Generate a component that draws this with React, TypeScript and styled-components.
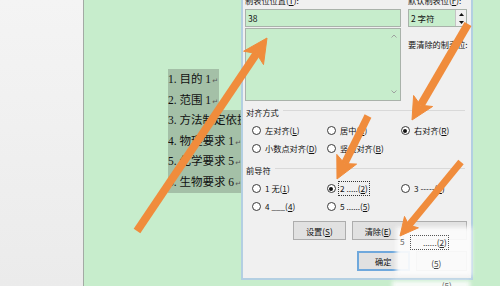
import React from "react";
import styled, { createGlobalStyle } from "styled-components";

const Global = createGlobalStyle`
  html, body { margin: 0; padding: 0; }
  body {
    width: 500px;
    height: 286px;
    overflow: hidden;
    font-family: "Noto Sans CJK SC", "Noto Sans", sans-serif;
  }
`;

const Screen = styled.div`
  position: relative;
  width: 500px;
  height: 286px;
  display: flex;
  overflow: hidden;
`;

const SidePane = styled.div`
  width: 83px;
  flex: none;
  background: linear-gradient(#f4f4f4, #ebebeb);
  border-right: 1px solid #a3aaa4;
`;

const Page = styled.div`
  position: relative;
  flex: 1;
  background: #c7edcc;
  padding: 69px 0 0 84px;
`;

const DocLines = styled.div`
  display: flex;
  flex-direction: column;
  font-family: "Liberation Serif", "Noto Sans CJK SC", serif;
  font-size: 11.5px;
  color: #111;
`;

const DocLine = styled.div<{ $w: number }>`
  width: ${(p) => p.$w}px;
  height: 20.6px;
  line-height: 20.6px;
  background: #a4c0a7;
  white-space: nowrap;
  overflow: hidden;
`;

const ParaMark = styled.span`
  font-family: "DejaVu Sans", sans-serif;
  font-size: 7px;
  color: #555;
  margin-left: 1px;
`;

const Dialog = styled.div`
  position: absolute;
  left: 157px;
  top: -11px;
  width: 232px;
  height: 291px;
  box-sizing: border-box;
  background: #f0f0f0;
  border: 2px solid #b3cfe2;
  padding: 2px 4px 0 2px;
  display: flex;
  flex-direction: column;
  font-size: 8.2px;
  color: #111;
`;

const TopGrid = styled.div`
  display: grid;
  grid-template-columns: 156px 59px;
  column-gap: 7px;
`;

const Col = styled.div`
  display: flex;
  flex-direction: column;
`;

const Label = styled.div<{ $mt?: number }>`
  height: 14px;
  line-height: 14px;
  margin-top: ${(p) => p.$mt ?? 0}px;
  white-space: nowrap;
`;

const TextBox = styled.div`
  height: 18px;
  box-sizing: border-box;
  margin-top: 2px;
  border: 1px solid #a9b2aa;
  background: #c7edcc;
  line-height: 16px;
  padding-left: 2px;
  font-family: "Noto Sans CJK SC", sans-serif;
  font-size: 8.5px;
  display: flex;
`;

const SpinText = styled.div`
  flex: 1;
`;

const SpinButtons = styled.div`
  width: 10px;
  display: flex;
  flex-direction: column;
  border-left: 1px solid #c4c4c4;
  background: #f0f0f0;
`;

const SpinHalf = styled.div`
  flex: 1;
  display: flex;
  align-items: center;
  justify-content: center;
`;

const ListBox = styled.div`
  height: 73px;
  box-sizing: border-box;
  margin-top: 1px;
  border: 1px solid #a9b2aa;
  background: #c7edcc;
  display: flex;
  justify-content: flex-end;
`;

const ScrollTrack = styled.div`
  width: 12px;
  display: flex;
  flex-direction: column;
  justify-content: space-between;
  align-items: center;
  padding: 5px 0 6px;
`;

const SectionHeader = styled.div<{ $mt: number }>`
  display: flex;
  align-items: flex-start;
  margin-top: ${(p) => p.$mt}px;
  padding-left: 1px;
  height: 14px;
  line-height: 14px;
`;

const SectionRule = styled.div`
  flex: 1;
  height: 1px;
  margin: 5px 2px 0 4px;
  background: #d9d9d9;
`;

const RadioGrid = styled.div<{ $mt: number }>`
  display: grid;
  grid-template-columns: 75px 74px 1fr;
  grid-auto-rows: 17.6px;
  margin-top: ${(p) => p.$mt}px;
  padding-left: 6.5px;
`;

const Radio = styled.div`
  display: flex;
  align-items: center;
  gap: 3.5px;
  white-space: nowrap;
`;

const RadioDot = styled.span<{ $on?: boolean }>`
  width: 9px;
  height: 9px;
  box-sizing: border-box;
  border-radius: 50%;
  border: 1px solid #3a3a3a;
  background: #fff;
  flex: none;
  display: flex;
  align-items: center;
  justify-content: center;
  &::after {
    content: "";
    width: 4px;
    height: 4px;
    border-radius: 50%;
    background: ${(p) => (p.$on ? "#111" : "transparent")};
  }
`;

const RadioText = styled.span<{ $focus?: boolean }>`
  line-height: 11px;
  padding: 1px 1px;
  border: 1px dotted ${(p) => (p.$focus ? "#333" : "transparent")};
  margin-left: -1px;
`;

const ButtonRow = styled.div<{ $mt: number; $pl: number }>`
  display: flex;
  gap: 6px;
  margin-top: ${(p) => p.$mt}px;
  padding-left: ${(p) => p.$pl}px;
`;

const Button = styled.div<{ $w: number; $h: number; $default?: boolean }>`
  width: ${(p) => p.$w}px;
  height: ${(p) => p.$h}px;
  box-sizing: border-box;
  background: #e1e1e1;
  border: ${(p) => (p.$default ? "2px solid #6fa8dc" : "1px solid #adadad")};
  display: flex;
  align-items: center;
  justify-content: center;
  white-space: nowrap;
`;

const Ghost = styled.div<{ $x: number; $y: number; $w: number; $h: number }>`
  position: absolute;
  left: ${(p) => p.$x}px;
  top: ${(p) => p.$y}px;
  width: ${(p) => p.$w}px;
  height: ${(p) => p.$h}px;
  background: rgba(252, 252, 252, 0.93);
  filter: blur(2px);
`;

const GhostText = styled.div<{ $x: number; $y: number; $c?: string; $box?: boolean }>`
  position: absolute;
  left: ${(p) => p.$x}px;
  top: ${(p) => p.$y}px;
  font-size: 8.2px;
  line-height: 11px;
  color: ${(p) => p.$c ?? "#222"};
  white-space: nowrap;
  padding: 1px;
  border: 1px dotted ${(p) => (p.$box ? "#555" : "transparent")};
`;

const Overlay = styled.svg`
  position: absolute;
  left: 0;
  top: 0;
  pointer-events: none;
`;

type ArrowProps = { x1: number; y1: number; x2: number; y2: number; w: number; hl: number; hw: number };

function Arrow({ x1, y1, x2, y2, w, hl, hw }: ArrowProps) {
  const dx = x2 - x1;
  const dy = y2 - y1;
  const L = Math.hypot(dx, dy);
  const ux = dx / L;
  const uy = dy / L;
  const px = -uy;
  const py = ux;
  const bx = x2 - ux * hl;
  const by = y2 - uy * hl;
  const nx = x2 - ux * hl * 0.78;
  const ny = y2 - uy * hl * 0.78;
  const pts = [
    [x2, y2],
    [bx + px * hw, by + py * hw],
    [nx, ny],
    [bx - px * hw, by - py * hw],
  ]
    .map((p) => p.map((v) => v.toFixed(1)).join(","))
    .join(" ");
  return (
    <g fill="#f08c3c" stroke="#f08c3c">
      <line x1={x1} y1={y1} x2={nx} y2={ny} strokeWidth={w} />
      <polygon points={pts} strokeWidth={1} strokeLinejoin="round" />
    </g>
  );
}

const Chevron = ({ up }: { up?: boolean }) => (
  <svg width="6" height="4" viewBox="0 0 6 4">
    <path d={up ? "M0.5 3.5 L3 1 L5.5 3.5" : "M0.5 0.5 L3 3 L5.5 0.5"} fill="none" stroke="#9a9a9a" strokeWidth="0.9" />
  </svg>
);

const Tri = ({ up }: { up?: boolean }) => (
  <svg width="5" height="3" viewBox="0 0 5 3">
    <path d={up ? "M0 3 L2.5 0 L5 3 Z" : "M0 0 L2.5 3 L5 0 Z"} fill="#111" />
  </svg>
);

const lines: { t: string; w: number }[] = [
  { t: "1. 目的 1", w: 51 },
  { t: "2. 范围 1", w: 51 },
  { t: "3. 方法制定依据 2", w: 90 },
  { t: "4. 物理要求 1", w: 90 },
  { t: "5. 化学要求 5", w: 90 },
  { t: "6. 生物要求 6", w: 90 },
];

export default function App() {
  return (
    <>
      <Global />
      <Screen>
        <SidePane />
        <Page>
          <DocLines>
            {lines.map((l) => (
              <DocLine key={l.t} $w={l.w}>
                {l.t}
                <ParaMark>↵</ParaMark>
              </DocLine>
            ))}
          </DocLines>
          <Dialog>
            <TopGrid>
              <Col>
                <Label>
                  制表位位置(<u>T</u>):
                </Label>
                <TextBox>38</TextBox>
                <ListBox>
                  <ScrollTrack>
                    <Chevron up />
                    <Chevron />
                  </ScrollTrack>
                </ListBox>
              </Col>
              <Col>
                <Label>
                  默认制表位(<u>F</u>):
                </Label>
                <TextBox>
                  <SpinText>2 字符</SpinText>
                  <SpinButtons>
                    <SpinHalf>
                      <Tri up />
                    </SpinHalf>
                    <SpinHalf>
                      <Tri />
                    </SpinHalf>
                  </SpinButtons>
                </TextBox>
                <Label $mt={10}>要清除的制表位:</Label>
              </Col>
            </TopGrid>

            <SectionHeader $mt={4}>
              对齐方式
              <SectionRule />
            </SectionHeader>
            <RadioGrid $mt={3}>
              <Radio>
                <RadioDot />
                <RadioText>
                  左对齐(<u>L</u>)
                </RadioText>
              </Radio>
              <Radio>
                <RadioDot />
                <RadioText>
                  居中(<u>C</u>)
                </RadioText>
              </Radio>
              <Radio>
                <RadioDot $on />
                <RadioText>
                  右对齐(<u>R</u>)
                </RadioText>
              </Radio>
              <Radio>
                <RadioDot />
                <RadioText>
                  小数点对齐(<u>D</u>)
                </RadioText>
              </Radio>
              <Radio>
                <RadioDot />
                <RadioText>
                  竖线对齐(<u>B</u>)
                </RadioText>
              </Radio>
            </RadioGrid>

            <SectionHeader $mt={6}>
              前导符
              <SectionRule />
            </SectionHeader>
            <RadioGrid $mt={3}>
              <Radio>
                <RadioDot />
                <RadioText>
                  1 无(<u>1</u>)
                </RadioText>
              </Radio>
              <Radio>
                <RadioDot $on />
                <RadioText $focus>
                  2 .....(<u>2</u>)
                </RadioText>
              </Radio>
              <Radio>
                <RadioDot />
                <RadioText>
                  3 -----(<u>3</u>)
                </RadioText>
              </Radio>
              <Radio>
                <RadioDot />
                <RadioText>
                  4 ___(<u>4</u>)
                </RadioText>
              </Radio>
              <Radio>
                <RadioDot />
                <RadioText>
                  5 ......(<u>5</u>)
                </RadioText>
              </Radio>
            </RadioGrid>

            <ButtonRow $mt={6} $pl={48}>
              <Button $w={53} $h={19}>
                设置(<u>S</u>)
              </Button>
              <Button $w={53} $h={19}>
                清除(<u>E</u>)
              </Button>
              <Button $w={57} $h={19} />
            </ButtonRow>
            <ButtonRow $mt={11} $pl={112}>
              <Button $w={53} $h={20} $default>
                确定
              </Button>
              <Button $w={52} $h={20} />
            </ButtonRow>
          </Dialog>
        </Page>

        <Ghost $x={396} $y={227} $w={76} $h={49} />
        <Ghost $x={392} $y={281} $w={78} $h={8} />
        <GhostText $x={398} $y={234} $c="#666">
          5
        </GhostText>
        <GhostText $x={410} $y={235} $box $c="#333">
          {"\u00a0\u00a0\u00a0\u00a0\u00a0\u00a0"}......(<u>2</u>)
        </GhostText>
        <GhostText $x={420} $y={256} $c="#444">
          {"\u00a0\u00a0\u00a0\u00a0\u00a0"}(<u>5</u>)
        </GhostText>
        <GhostText $x={426} $y={278} $c="#666">
          ......(5)
        </GhostText>

        <Overlay width="500" height="286" viewBox="0 0 500 286">
          <Arrow x1={137} y1={231} x2={267} y2={38} w={8} hl={24} hw={12} />
          <Arrow x1={468} y1={24} x2={412} y2={120} w={8} hl={22} hw={11} />
          <Arrow x1={368} y1={116} x2={337} y2={179} w={7.5} hl={22} hw={11} />
          <Arrow x1={461} y1={162} x2={400} y2={236} w={7} hl={18} hw={9} />
        </Overlay>
      </Screen>
    </>
  );
}
